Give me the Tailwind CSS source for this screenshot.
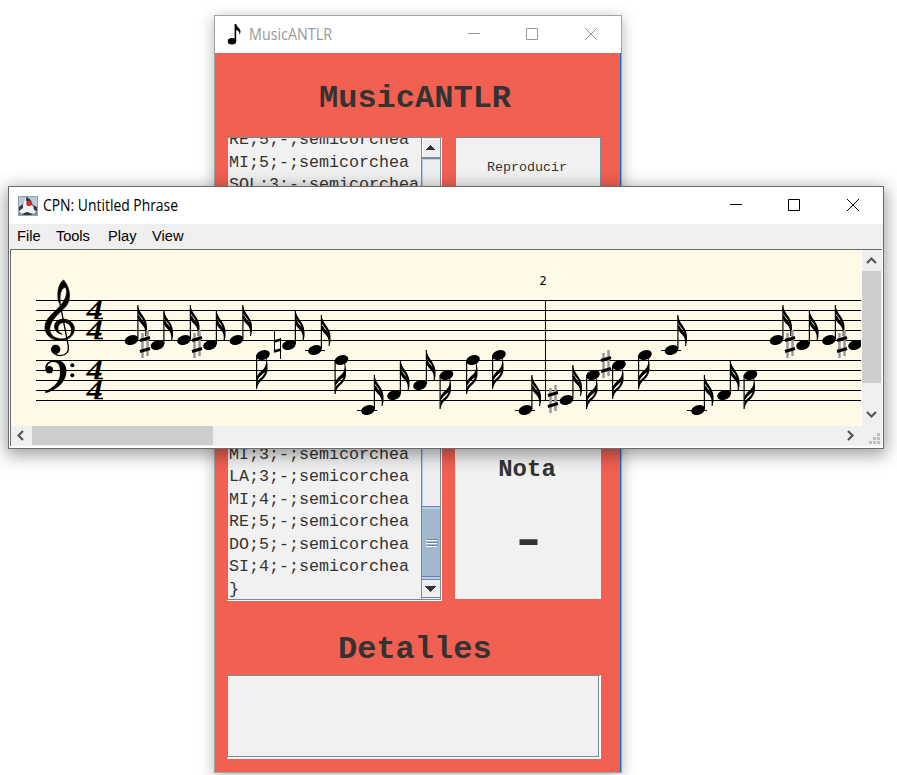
<!DOCTYPE html>
<html lang="es">
<head>
<meta charset="utf-8">
<title>MusicANTLR</title>
<script src="https://cdn.jsdelivr.net/npm/@tailwindcss/browser@4"></script>
</head>
<body class="bg-white">
<main class="relative w-[897px] h-[775px] overflow-hidden bg-white">

  <!-- Main application window -->
  <section class="absolute left-[214px] top-[15px] w-[408px] h-[758px] border border-[#a3a3a3] flex flex-col shadow-[0_3px_14px_rgba(0,0,0,0.3)]">
    <header class="h-[37px] shrink-0 bg-white flex items-center text-[#999999]">
      <svg class="ml-3 w-[18px] h-6 shrink-0" viewBox="0 0 18 24" fill="#000"><ellipse cx="5" cy="18.3" rx="4.2" ry="3.2"/><path d="M7.6 1h1.6c.4 3 4.3 4 4.3 7.500q0 1.500-1 3c-.2-3-1.300-4-3.300-4.500V18H7.600z"/></svg>
      <h1 class="ml-1 w-[90px] h-[37px]"><svg class="w-[90px] h-[37px]" fill="#999999"><text x="0" y="24" textLength="83" lengthAdjust="spacingAndGlyphs" font-family="'Open Sans',sans-serif" font-size="15.500">MusicANTLR</text></svg></h1>
      <svg class="ml-auto mr-[22px] w-[132px] h-[37px]" fill="none" stroke="#999999"><path d="M1 17.500h12M59.500 12.500h11v11h-11zM118 12l12 12M130 12l-12 12"/></svg>
    </header>
    <div class="flex-1 bg-[#f26052] border-r border-[#1671bd] flex flex-col pl-3 text-[#333333] font-['Liberation_Mono',monospace]">
      <h2 class="h-[84px] pt-[26px] pl-[92px] text-[32px] leading-[40px] font-bold">MusicANTLR</h2>
      <div class="flex gap-[13px]">
        <div class="w-[215px] h-[464px] border-l border-t border-[#7a8a99] border-r-white border-b-white border-r border-b bg-[#f1f1f1] flex">
          <div class="w-[193px] h-[462px] overflow-hidden border-b border-[#7a8a99] flex flex-col justify-between text-[16.67px] leading-[22.5px] whitespace-pre">
            <div class="-mt-[9px] pl-px"><p>RE;5;-;semicorchea</p><p>MI;5;-;semicorchea</p><p>SOL;3;-;semicorchea</p></div>
            <div class="pl-px -mb-[2px]"><p>MI;3;-;semicorchea</p><p>LA;3;-;semicorchea</p><p>MI;4;-;semicorchea</p><p>RE;5;-;semicorchea</p><p>DO;5;-;semicorchea</p><p>SI;4;-;semicorchea</p><p>}</p></div>
          </div>
          <svg class="w-5 h-[462px]" viewBox="421 138 20 462" shape-rendering="crispEdges">
            <path d="M421 138h20v462h-20z" fill="#eeeeee"/>
            <path d="M421 138h1v462h-1zM440 138h1v462h-1zM421 599h20v1h-20zM422 157h18v2h-18z" fill="#7a8a99"/>
            <path d="M422 159h18v1h-18zM422 160h1v346h-1z" fill="#b8cfe5"/>
            <path d="M422 139h18v1h-18zM422 139h1v18h-1z" fill="#fff"/>
            <path d="M426 150h9l-4.500-5z" fill="#333"/>
            <path d="M422 506h18v71h-18z" fill="#a3b8cc"/>
            <path d="M421 506h19v1h-19zM421 506h1v71h-1zM421 576h19v1h-19z" fill="#6382bf"/>
            <path d="M422 507h18v2h-18zM422 577h18v2h-18z" fill="#b8cfe5"/>
            <path d="M427 539h11v1h-11zM427 542h11v1h-11zM427 545h11v1h-11z" fill="#6382bf"/>
            <path d="M426 540h11v1h-11zM426 543h11v1h-11zM426 546h11v1h-11z" fill="#fff"/>
            <path d="M422 579h18v1h-18zM422 597h18v1h-18z" fill="#7a8a99"/>
            <path d="M425 586h11l-5.500 6z" fill="#333"/>
          </svg>
        </div>
        <div class="w-[146px] h-[462px] flex flex-col">
          <button class="h-[60px] pt-0.5 border border-[#7a8a99] bg-[#f1f1f1] text-[13.33px] -indent-[2px]">Reproducir</button>
          <div class="flex-1 mt-60 bg-[#f1f1f1] flex flex-col items-center">
            <h3 class="mt-[19px] text-[24px] leading-[28px] font-bold -translate-x-px">Nota</h3>
            <p class="mt-[30px] text-[48px] leading-[56px] font-bold scale-x-[1.32]">-</p>
          </div>
        </div>
      </div>
      <h2 class="h-[74px] pt-[29px] pl-[111px] text-[32px] leading-[40px] font-bold">Detalles</h2>
      <div class="w-[374px] h-[84px] border-l border-t border-l-[#7a8a99] border-t-[#7a8a99] border-r-2 border-b-2 border-r-white border-b-white bg-[#f1f1f1]"><div class="h-full border-r border-b border-[#7a8a99]"></div></div>
    </div>
  </section>

  <!-- Score window -->
  <section class="absolute left-[8px] top-[186px] w-[876px] h-[263px] border border-[#6b6b6b] bg-white flex flex-col shadow-[0_4px_16px_2px_rgba(0,0,0,0.38)]">
    <header class="h-[37px] shrink-0 flex items-center">
      <svg class="ml-[9px] w-5 h-5 shrink-0" viewBox="0 0 20 20">
        <path d="M0 0h20v20H0z" fill="#8fa3b5"/><path d="M1 1h18v18H1z" fill="#bccbd9"/><path d="M1 12h18v7H1z" fill="#7e92a6"/>
        <path d="M8 1C6 5 6 9 4 12l-3 3 3 3 5-2 6 2 3-2-3-5-2-5z" fill="#f3f3f1"/>
        <path d="M8 1c4 1 6 4 7 9l-3-2-4-3zM5 8L1 11v4l4-3zM15 9l4 2v4l-3-1zM4 18l5-2 6 2-3 1H6z" fill="#343a40"/>
        <circle cx="11" cy="7.500" r="2.700" fill="#d62d25"/>
      </svg>
      <h1 class="ml-[5px]"><svg class="w-[150px] h-[37px]"><text x="0" y="24" textLength="135" lengthAdjust="spacingAndGlyphs" font-family="'Open Sans',sans-serif" font-size="15.500">CPN: Untitled Phrase</text></svg></h1>
      <svg class="ml-auto mr-[22px] w-[132px] h-[37px]" fill="none" stroke="#000"><path d="M1 17.500h12M59.500 12.500h11v11h-11zM118 12l12 12M130 12l-12 12"/></svg>
    </header>
    <nav class="h-[25px] shrink-0 bg-[#efefef] flex pl-2 text-[14.67px] leading-[25px] text-black font-['Liberation_Sans',sans-serif]"><span class="w-[39px]">File</span><span class="w-[52px] tracking-[-0.1px]">Tools</span><span class="w-11">Play</span><span>View</span></nav>
    <div class="ml-px mr-px h-[197px] border-l border-t border-[#6b6b6b] bg-[#efefef] flex flex-col">
      <div class="flex h-[176px]">
        <svg class="w-[850px] h-[176px] bg-[#fffae8] shrink-0" viewBox="11 250 850 176">
          <defs>
            <g id="head"><ellipse rx="7" ry="4.700" transform="rotate(-18)"/></g>
            <g id="up"><use href="#head"/><path d="M5.800 -35h1.200V-1H5.800z"/><path d="M6 -35L7.500 -31C9 -26 15 -22 15.500 -14Q16 -9 14.500 -4L13.500 -4C14.500 -10 13 -13 10.500 -15.500C8 -18 6.500 -20 6.200 -23V-26C8 -22 10 -19 12.500 -17C12 -21 8 -24 6.500 -27Z"/><path d="M7 -24C9 -19 12 -18 14 -13" fill="none" stroke="#000" stroke-width="2"/></g>
            <g id="down"><use href="#head"/><path d="M-7 0h1.200V34h-1.200z"/><path d="M-6.500 34L-4.500 29C-2 25 4 22 4.500 15Q5 9 3.500 3L2.500 3C4 9 2.500 12 0 14.500C-3 17 -5.500 19 -6.300 23V26C-4 22 -1 19 2 17C1 21 -4 24 -6 27Z"/><path d="M-6 24C-4 19 1 18 3.500 13" fill="none" stroke="#000" stroke-width="1.900"/></g>
            <g id="sharp"><path d="M-2.500 -12V13M2.500 -15V11" stroke="#999" stroke-width="2.500"/><path d="M-5 -4.500L5 -7.500M-5 6.500L5 3.500" stroke="#000" stroke-width="3"/></g>
            <path id="ledger" d="M-10 0h20v1h-20z"/>
          </defs>
          <path d="M36 300.500h825M36 310.500h825M36 320.500h825M36 330.500h825M36 340.500h825M36 360.500h825M36 370.500h825M36 380.500h825M36 390.500h825M36 400.500h825M545.500 300v100" stroke="#000"/>
          <g transform="translate(20 270) scale(.33333)">
            <path d="M116 97C108 62 120 35 131 30C150 52 156 88 137 110C119 130 90 149 89 178C91 207 130 214 147 199C160 188 156 162 137 158C119 154 109 171 116 185L127 193C107 191 99 172 106 159C119 140 156 144 163 172C166 201 138 215 109 210C79 205 68 176 79 154C90 131 121 116 135 86C143 67 140 54 134 52C123 57 118 75 121 97Z" stroke="#000" stroke-width="2"/>
            <path d="M119 95L145 228Q148 255 121 257Q99 256 96 239" fill="none" stroke="#000" stroke-width="4"/><circle cx="107" cy="238" r="14"/>
            <path d="M77 299C72 283 86 270 108 270C133 272 141 288 139 309C136 340 107 361 76 370L76 364C105 350 121 333 120 306C121 286 113 275 100 276Q87 276 82 288Z"/><circle cx="88" cy="299" r="11"/><circle cx="157" cy="286" r="6"/><circle cx="157" cy="316" r="6"/>
          </g>
          <g font-family="'Liberation Serif',serif" font-weight="bold" font-style="italic" font-size="27"><text transform="translate(86.500 318.500) scale(1.200 1)">4</text><text transform="translate(86.500 338.500) scale(1.200 1)">4</text><text transform="translate(86.500 378.500) scale(1.200 1)">4</text><text transform="translate(86.500 398.500) scale(1.200 1)">4</text></g>
          <path d="M95 317.700h8v1.500h-8zM95 337.700h8v1.500h-8zM95 377.700h8v1.500h-8zM95 397.700h8v1.500h-8z"/>
          <text x="539.500" y="285" font-family="'DejaVu Sans',sans-serif" font-size="11.500">2</text>
          <use href="#up" x="131.500" y="340"/><use href="#sharp" x="145" y="345"/><use href="#up" x="157.500" y="345"/><use href="#up" x="184" y="340"/><use href="#sharp" x="197" y="345"/><use href="#up" x="210" y="345"/><use href="#up" x="236.500" y="340"/>
          <use href="#down" x="263" y="355"/>
          <path d="M274.500 331v21M280.500 338v21" stroke="#000"/><path d="M274 341.500l7-2M274 351.500l7-2" stroke="#000" stroke-width="2.500"/>
          <use href="#up" x="289" y="345"/><use href="#up" x="315" y="350"/><use href="#ledger" x="315" y="350"/>
          <use href="#down" x="341.500" y="360"/><use href="#up" x="368" y="410"/><use href="#ledger" x="367" y="410"/>
          <use href="#up" x="394" y="395"/><use href="#up" x="420" y="385"/><use href="#down" x="446.500" y="375"/><use href="#down" x="473" y="360"/><use href="#down" x="499" y="355"/>
          <use href="#up" x="525.500" y="410"/><use href="#ledger" x="525" y="410"/>
          <use href="#sharp" x="553" y="400"/><use href="#up" x="566.500" y="400"/><use href="#down" x="593" y="375"/><use href="#sharp" x="606" y="365"/><use href="#down" x="619" y="365"/><use href="#down" x="645" y="355"/>
          <use href="#up" x="671.500" y="350"/><use href="#ledger" x="671" y="350"/><use href="#up" x="698" y="410"/><use href="#ledger" x="697" y="410"/><use href="#up" x="724" y="395"/><use href="#down" x="750.500" y="375"/>
          <use href="#up" x="776.500" y="340"/><use href="#sharp" x="790" y="345"/><use href="#up" x="803" y="345"/><use href="#up" x="829" y="340"/><use href="#sharp" x="842" y="345"/><use href="#head" x="855" y="345"/>
        </svg>
        <div class="w-5 border-l border-white flex flex-col items-center">
          <svg class="w-5 h-[21px] shrink-0" fill="none" stroke="#555" stroke-width="2.200"><path d="M5 13l4.500-4.500L14 13"/></svg>
          <div class="w-[19px] h-[112px] bg-[#cdcdcd] shrink-0 self-start"></div>
          <svg class="w-5 h-[43px]" fill="none" stroke="#555" stroke-width="2.200"><path d="M5 29l4.500 4.500L14 29"/></svg>
        </div>
      </div>
      <div class="flex h-5">
        <svg class="w-[21px] h-5" fill="none" stroke="#555" stroke-width="2.200"><path d="M12 5L7.500 9.500 12 14"/></svg>
        <div class="w-[181px] h-[19px] bg-[#cdcdcd]"></div>
        <svg class="ml-auto w-[46px] h-5"><path d="M12 5l4.500 4.500L12 14" fill="none" stroke="#555" stroke-width="2.200"/><path d="M41 7h3v3h-3zM37 11h3v3h-3zM41 11h3v3h-3zM33 15h3v3h-3zM37 15h3v3h-3zM41 15h3v3h-3z" fill="#bfbfbf"/></svg>
      </div>
    </div>
  </section>
</main>
</body>
</html>
